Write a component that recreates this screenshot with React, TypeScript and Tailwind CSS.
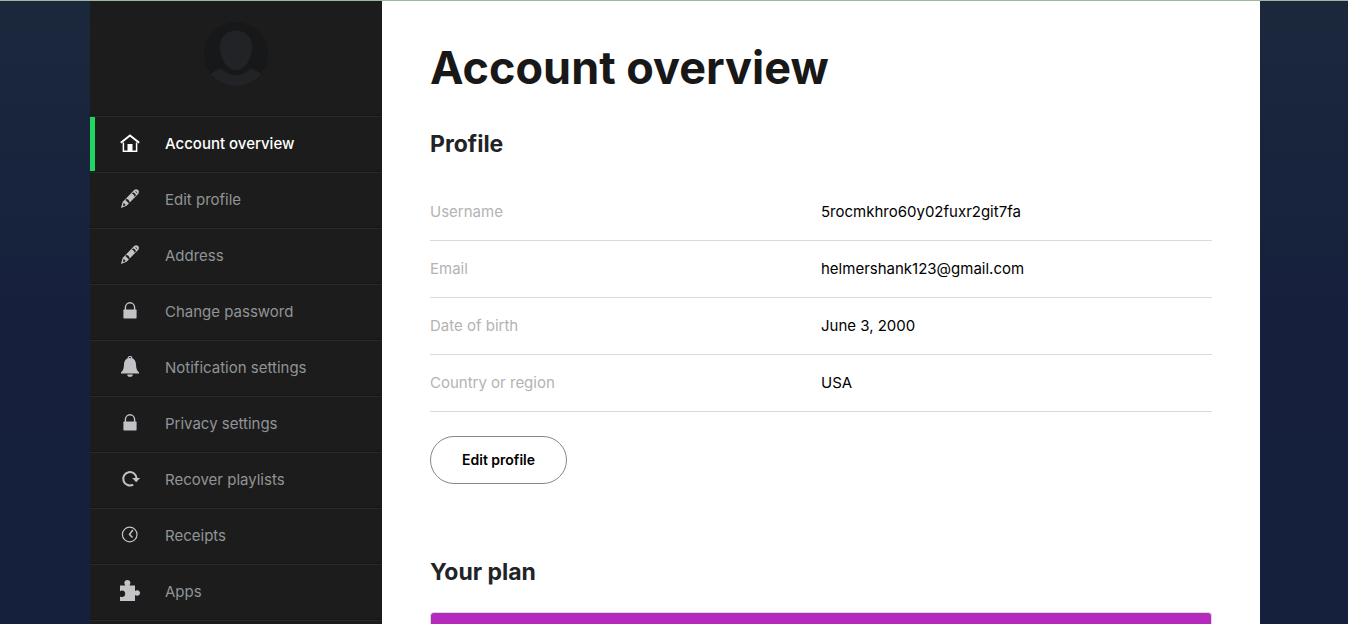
import type { ReactNode } from "react";

type NavItem = { label: string; icon: ReactNode; active?: boolean };

const Icon = ({ children, viewBox = "0 1 24 24" }: { children: ReactNode; viewBox?: string }) => (
  <svg viewBox={viewBox} className="size-6 shrink-0" fill="none" aria-hidden="true">
    {children}
  </svg>
);

const HomeIcon = () => (
  <Icon viewBox="0 0 24 24">
    <path d="M2.8 10.8 12 3.4l9.2 7.4" stroke="currentColor" strokeWidth="1.9" />
    <path d="M5.4 10.5v8.8h13.2v-8.8" stroke="currentColor" strokeWidth="1.5" />
    <path d="M9.5 12h5v8h-5z" fill="currentColor" />
  </Icon>
);

const PencilIcon = () => (
  <Icon>
    <path
      d="M3 21l1.6-6L16.2 3c1.2-1.1 2.8-1 3.9.1s1.1 2.6 0 3.8L8.6 18.7z"
      fill="currentColor"
    />
    <path d="M5.6 15.8l2.2 2.2-2.8 1.3z" fill="#1c1c1c" />
    <path d="M7.4 12.9l3.6 3.7 1-1.1-1.6-2.7-2-1z" fill="#1c1c1c" />
    <path d="M13.8 6.8c1.5.3 2.5 1.3 2.8 2.9l1.3-1.3c-.3-1.6-1.3-2.6-2.9-2.9z" fill="#1c1c1c" />
    <path d="M17 4.3c1-.7 2.7.9 2 2z" fill="#1c1c1c" />
  </Icon>
);

const LockIcon = () => (
  <Icon>
    <path d="M7.4 11V8.6a4.6 4.9 0 0 1 9.2 0V11" stroke="currentColor" strokeWidth="1.4" />
    <rect x="5.4" y="10.4" width="13.2" height="9.2" rx="0.8" fill="currentColor" />
  </Icon>
);

const BellIcon = () => (
  <Icon>
    <circle cx="12" cy="3.4" r="1.9" stroke="currentColor" strokeWidth="1.2" />
    <path
      d="M12 3c4 0 5.8 2.8 6 6.4.2 4 .8 6 3 7.9v1.2H3v-1.2c2.2-1.9 2.8-3.9 3-7.9C6.2 5.8 8 3 12 3z"
      fill="currentColor"
    />
    <path d="M9.2 19.4h5.6a2.8 2.3 0 0 1-5.6 0z" fill="currentColor" />
  </Icon>
);

const RecoverIcon = () => (
  <Icon>
    <path d="M15.2 17.6a6.7 6.7 0 1 1 3.4-6" stroke="currentColor" strokeWidth="2" />
    <path d="M14.2 11H22l-3.8 4.2z" fill="currentColor" />
  </Icon>
);

const ClockIcon = () => (
  <Icon>
    <circle cx="11.7" cy="11.5" r="7.3" stroke="currentColor" strokeWidth="1.2" />
    <path d="M14.8 7 11.5 11.5l3 3" stroke="currentColor" strokeWidth="1.5" />
  </Icon>
);

const PuzzleIcon = () => (
  <Icon>
    <path
      d="M2 6.5h5.4C5.4 4 6.6 1 9.4 1s4 3 2 5.5H17V12c2-1.6 5-.6 5 2s-3 3.6-5 2v6H2v-4.6c2.2 1.4 5.2.4 5.2-2.6S4.2 10.8 2 12.2z"
      fill="currentColor"
    />
  </Icon>
);

const navItems: NavItem[] = [
  { label: "Account overview", icon: <HomeIcon />, active: true },
  { label: "Edit profile", icon: <PencilIcon /> },
  { label: "Address", icon: <PencilIcon /> },
  { label: "Change password", icon: <LockIcon /> },
  { label: "Notification settings", icon: <BellIcon /> },
  { label: "Privacy settings", icon: <LockIcon /> },
  { label: "Recover playlists", icon: <RecoverIcon /> },
  { label: "Receipts", icon: <ClockIcon /> },
  { label: "Apps", icon: <PuzzleIcon /> },
];

const profile = [
  ["Username", "5rocmkhro60y02fuxr2git7fa"],
  ["Email", "helmershank123@gmail.com"],
  ["Date of birth", "June 3, 2000"],
  ["Country or region", "USA"],
];

function Avatar() {
  return (
    <svg viewBox="0 0 64 64" className="size-16" role="img" aria-label="Profile picture">
      <defs>
        <clipPath id="avatar-clip">
          <circle cx="32" cy="32" r="32" />
        </clipPath>
      </defs>
      <g clipPath="url(#avatar-clip)">
        <rect width="64" height="64" fill="#171819" />
        <path
          d="M32 8.5c9.5 0 16 7 16 16.5C48 37 41 48 32 48S16 37 16 25C16 15.5 22.5 8.5 32 8.5z"
          fill="#222326"
        />
        <path
          d="M7 51.5c3-2.3 6.5-3.8 11-5C22 51 26.5 53.2 32 53.2S42 51 46 46.5c4.5 1.2 8 2.7 11 5V64H7z"
          fill="#222326"
        />
      </g>
    </svg>
  );
}

function Sidebar() {
  return (
    <aside className="w-[292px] shrink-0 bg-[#1c1c1c]">
      <div className="flex h-[115px] justify-center border-b border-[#171717] pt-[21px]">
        <Avatar />
      </div>
      <nav aria-label="Account">
        <ul className="border-b border-[#292929]">
          {navItems.map((item) => (
            <li key={item.label} className="border-t border-b border-t-[#292929] border-b-[#171717]">
              <a
                href="#"
                aria-current={item.active ? "page" : undefined}
                className={
                  item.active
                    ? "flex h-[54px] items-center gap-[23px] border-l-5 border-[#1ed760] pl-[23px] text-[15px] font-medium text-white"
                    : "flex h-[54px] items-center gap-[23px] border-l-5 border-transparent pl-[23px] text-[15px] text-[#919496]"
                }
              >
                <span className={item.active ? "text-white" : "text-[#c1c3c6]"}>{item.icon}</span>
                {item.label}
              </a>
            </li>
          ))}
        </ul>
      </nav>
    </aside>
  );
}

export default function App() {
  return (
    <div className="flex min-h-screen flex-col border-t border-[#9eb79e] bg-linear-to-b from-[#1b283c] via-[#16203d] to-[#15203d] pl-0.5 font-['Inter',sans-serif]">
      <div className="mx-auto flex w-full max-w-[1170px] flex-1">
        <Sidebar />
        <main className="flex flex-1 flex-col bg-white px-12 pt-[39px]">
          <h1 className="text-[45px] leading-14 font-bold text-[#181818]">Account overview</h1>
          <section>
            <h2 className="mt-8 text-[23px] leading-8 font-bold text-[#222326]">Profile</h2>
            <table className="mt-6 w-full table-fixed border-separate border-spacing-0 text-[15px]">
              <tbody>
                {profile.map(([label, value]) => (
                  <tr key={label} className="h-[57px]">
                    <th
                      scope="row"
                      className="w-1/2 border-b border-[#d9dadc] text-left font-normal text-[#b3b3b3]"
                    >
                      {label}
                    </th>
                    <td className="border-b border-[#d9dadc] text-black">{value}</td>
                  </tr>
                ))}
              </tbody>
            </table>
            <button
              type="button"
              className="mt-6 h-12 rounded-full border border-[#878787] px-[31px] text-sm font-semibold text-black"
            >
              Edit profile
            </button>
          </section>
          <section className="mt-18 flex flex-1 flex-col">
            <h2 className="text-[23px] leading-8 font-bold text-[#222326]">Your plan</h2>
            <div className="mt-6 flex-1 rounded-t border border-b-0 border-[#d9dadc] bg-[#b42abc]" />
          </section>
        </main>
      </div>
    </div>
  );
}
